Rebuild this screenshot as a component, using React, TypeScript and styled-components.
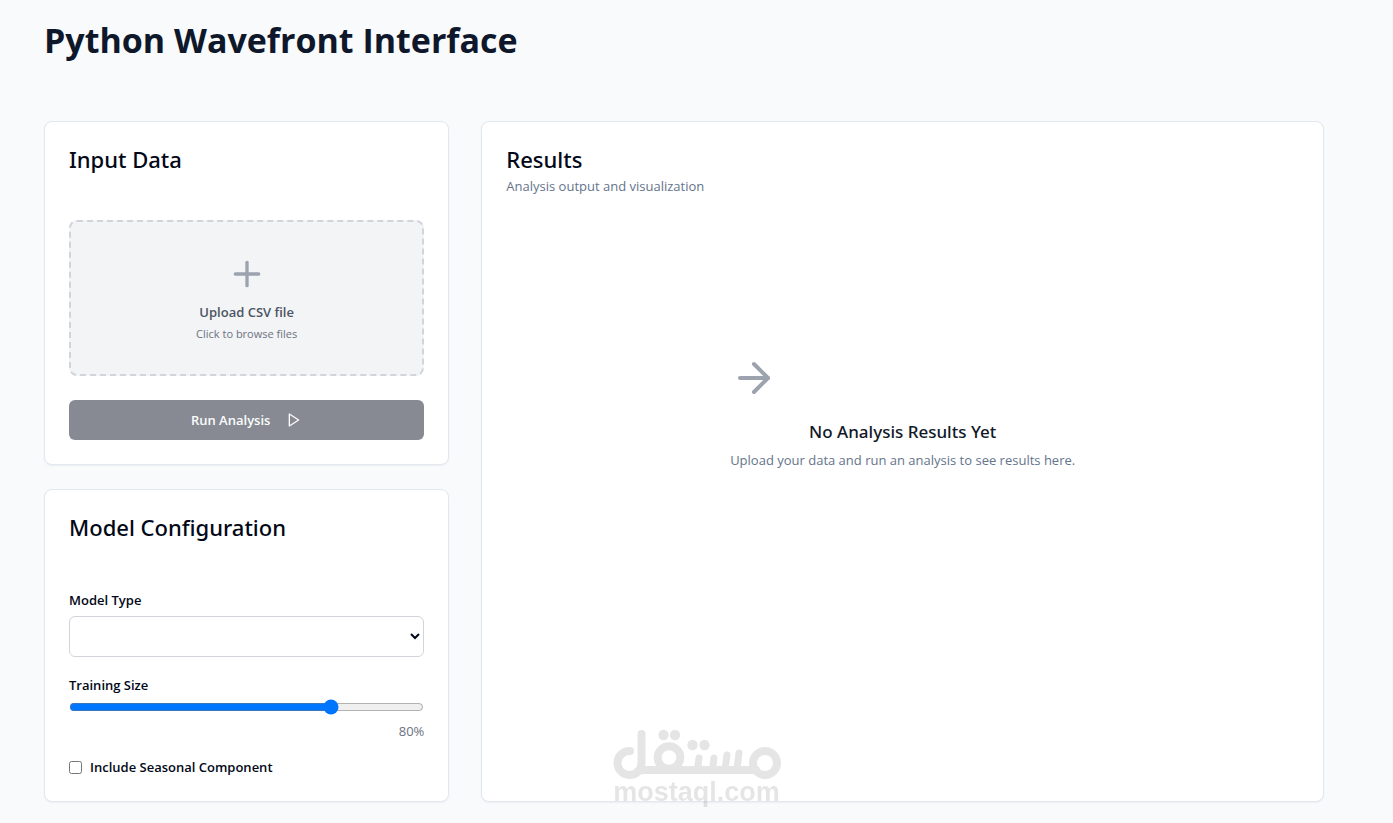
import React, { useState } from "react";
import styled, { createGlobalStyle } from "styled-components";
import { ArrowRight, Plus } from "lucide-react";

const GlobalStyle = createGlobalStyle`
  *, *::before, *::after { box-sizing: border-box; }
  body {
    margin: 0;
    background: #f8fafc;
    color: #020817;
    font-family: "Segoe UI", "Open Sans", "Noto Sans", sans-serif;
    font-size: 13px;
    line-height: 20px;
  }
  h1, h2, h3, p { margin: 0; }
  button, select, input { font: inherit; }
`;

const Page = styled.main`
  padding: 20px 69px 21px 44px;
`;

const PageTitle = styled.h1`
  margin-bottom: 61px;
  font-size: 34px;
  line-height: 40px;
  font-weight: 700;
  color: #0f172a;
`;

const Columns = styled.div`
  display: grid;
  grid-template-columns: repeat(3, minmax(0, 1fr));
  gap: 32px;

  @media (max-width: 900px) {
    grid-template-columns: minmax(0, 1fr);
  }
`;

const Sidebar = styled.div`
  display: flex;
  flex-direction: column;
  gap: 24px;
`;

const Card = styled.section<{ $wide?: boolean }>`
  display: flex;
  flex-direction: column;
  padding: 24px;
  background: #fff;
  border: 1px solid #e2e8f0;
  border-radius: 8px;
  box-shadow: 0 1px 2px rgba(0, 0, 0, 0.05);

  @media (min-width: 901px) {
    grid-column: ${(p) => (p.$wide ? "span 2" : "auto")};
  }
`;

const CardHeader = styled.header`
  display: flex;
  flex-direction: column;
  gap: 4px;
  min-height: 50px;
  margin-bottom: 24px;
`;

const CardTitle = styled.h2`
  font-family: "Segoe UI", "Noto Sans", sans-serif;
  font-size: 22px;
  line-height: 26px;
  font-weight: 500;
`;

const Muted = styled.p`
  color: #64748b;
`;

const Upload = styled.button`
  display: flex;
  flex-direction: column;
  align-items: center;
  padding: 32px;
  background: #f3f4f6;
  border: 2px dashed #d1d5db;
  border-radius: 8px;
  color: #9ca3af;
  cursor: pointer;
`;

const UploadTitle = styled.span`
  margin-top: 8px;
  font-weight: 600;
  color: #4b5563;
`;

const UploadHint = styled.span`
  margin-top: 4px;
  font-size: 11px;
  line-height: 16px;
  color: #6b7280;
`;

const RunButton = styled.button`
  display: flex;
  align-items: center;
  justify-content: center;
  gap: 16px;
  height: 40px;
  margin-top: 24px;
  padding: 0 16px;
  background: #111827;
  border: 0;
  border-radius: 6px;
  color: #f8fafc;
  font-weight: 600;
  opacity: 0.5;
`;

const Field = styled.div`
  display: flex;
  flex-direction: column;
  margin-bottom: 16px;
`;

const Label = styled.label`
  font-weight: 600;
  line-height: 24px;
`;

const Select = styled.select`
  height: 41px;
  margin-top: 4px;
  padding: 8px 0;
  background: #fff;
  border: 1px solid #d1d5db;
  border-radius: 6px;
  color: #020817;
`;

const Range = styled.input`
  width: auto;
  height: 16px;
  margin: 2px 0 6px;
`;

const RangeValue = styled.output`
  text-align: right;
  color: #6b7280;
`;

const CheckRow = styled.div`
  display: flex;
  align-items: center;
  gap: 8px;

  label { line-height: 20px; }
`;

const Checkbox = styled.input`
  width: 13px;
  height: 13px;
  margin: 0;
`;

const EmptyState = styled.div`
  align-self: center;
  margin: auto 0;
  padding-bottom: 174px;
  text-align: center;

  svg { display: block; color: #9ca3af; }
`;

const EmptyTitle = styled.h3`
  margin: 16px 0 4px;
  font-family: "Segoe UI", "Noto Sans", sans-serif;
  font-size: 17px;
  line-height: 28px;
  font-weight: 500;
  color: #111827;
`;

const Watermark = styled.div`
  position: fixed;
  left: 50%;
  bottom: 17px;
  transform: translateX(-50%);
  display: flex;
  flex-direction: column;
  align-items: center;
  opacity: 0.1;
  pointer-events: none;
  font-family: "Liberation Sans", Arial, sans-serif;
  font-size: 27px;
  line-height: 27px;
  font-weight: 700;
  color: #000;
`;

function PlayIcon() {
  return (
    <svg width="16" height="16" viewBox="0 0 24 24" fill="none" stroke="currentColor" strokeWidth="2" strokeLinecap="round" strokeLinejoin="round" aria-hidden="true">
      <polygon points="5 3 19 12 5 21 5 3" />
    </svg>
  );
}

function WatermarkLogo() {
  return (
    <svg width="168" height="50" viewBox="0 0 168 50" fill="none" stroke="currentColor" strokeWidth="8" strokeLinecap="round" strokeLinejoin="round" aria-hidden="true">
      <path d="M17 22 A12 12 0 1 0 28.5 34 V5 M25 42 Q28 41 32 41 H143" />
      <circle cx="56" cy="28.5" r="11.3" />
      <path strokeWidth="7" d="M86 29 L84.500 40 M101 29 L99.500 40 M114 26 L112 40 M126 24 L124 40" />
      <circle cx="152" cy="34" r="12" />
      <g fill="currentColor" stroke="none">
        <circle cx="50.500" cy="6" r="5.200" />
        <circle cx="62" cy="6" r="5.200" />
        <circle cx="79.500" cy="16" r="5.200" />
        <circle cx="91.500" cy="16" r="5.200" />
      </g>
    </svg>
  );
}

export default function App() {
  const [size, setSize] = useState(80);
  const [seasonal, setSeasonal] = useState(false);

  return (
    <>
      <GlobalStyle />
      <Page>
        <PageTitle>Python Wavefront Interface</PageTitle>
        <Columns>
          <Sidebar>
            <Card>
              <CardHeader>
                <CardTitle>Input Data</CardTitle>
              </CardHeader>
              <Upload type="button">
                <Plus size={40} />
                <UploadTitle>Upload CSV file</UploadTitle>
                <UploadHint>Click to browse files</UploadHint>
              </Upload>
              <RunButton type="button" disabled>
                Run Analysis
                <PlayIcon />
              </RunButton>
            </Card>
            <Card>
              <CardHeader>
                <CardTitle>Model Configuration</CardTitle>
              </CardHeader>
              <Field>
                <Label htmlFor="model-type">Model Type</Label>
                <Select id="model-type" defaultValue="">
                  <option value="" />
                </Select>
              </Field>
              <Field>
                <Label htmlFor="training-size">Training Size</Label>
                <Range
                  id="training-size"
                  type="range"
                  min={20}
                  max={100}
                  value={size}
                  onChange={(e) => setSize(Number(e.target.value))}
                />
                <RangeValue htmlFor="training-size">{size}%</RangeValue>
              </Field>
              <CheckRow>
                <Checkbox
                  id="seasonal"
                  type="checkbox"
                  checked={seasonal}
                  onChange={(e) => setSeasonal(e.target.checked)}
                />
                <Label htmlFor="seasonal">Include Seasonal Component</Label>
              </CheckRow>
            </Card>
          </Sidebar>
          <Card $wide>
            <CardHeader>
              <CardTitle>Results</CardTitle>
              <Muted>Analysis output and visualization</Muted>
            </CardHeader>
            <EmptyState>
              <ArrowRight size={48} />
              <EmptyTitle>No Analysis Results Yet</EmptyTitle>
              <Muted>Upload your data and run an analysis to see results here.</Muted>
            </EmptyState>
          </Card>
        </Columns>
      </Page>
      <Watermark>
        <WatermarkLogo />
        mostaql.com
      </Watermark>
    </>
  );
}
